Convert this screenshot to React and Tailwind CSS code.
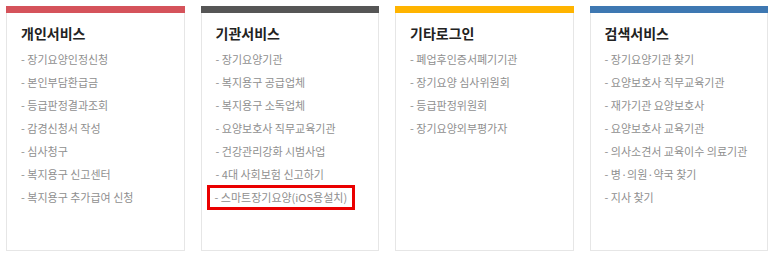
const cards = [
  {
    title: "개인서비스",
    bar: "bg-[#d5535b]",
    items: [
      "장기요양인정신청",
      "본인부담환급금",
      "등급판정결과조회",
      "감경신청서 작성",
      "심사청구",
      "복지용구 신고센터",
      "복지용구 추가급여 신청",
    ],
  },
  {
    title: "기관서비스",
    bar: "bg-[#565656]",
    items: [
      "장기요양기관",
      "복지용구 공급업체",
      "복지용구 소독업체",
      "요양보호사 직무교육기관",
      "건강관리강화 시범사업",
      "4대 사회보험 신고하기",
      "스마트장기요양(iOS용설치)",
    ],
    highlight: 6,
  },
  {
    title: "기타로그인",
    bar: "bg-[#ffb400]",
    items: ["폐업후인증서폐기기관", "장기요양 심사위원회", "등급판정위원회", "장기요양외부평가자"],
  },
  {
    title: "검색서비스",
    bar: "bg-[#3e78b2]",
    items: [
      "장기요양기관 찾기",
      "요양보호사 직무교육기관",
      "재가기관 요양보호사",
      "요양보호사 교육기관",
      "의사소견서 교육이수 의료기관",
      "병·의원·약국 찾기",
      "지사 찾기",
    ],
  },
];

function Card({ card }) {
  return (
    <div className="h-[245px] flex flex-col bg-white">
      <div className={`h-[7px] ${card.bar}`} />
      <div className="flex-1 border border-t-0 border-[#e6e6e6] px-[14px] pt-[10px]">
        <h2 className="text-[14px] leading-[20px] font-bold text-[#222]">{card.title}</h2>
        <ul className="mt-[5px]">
          {card.items.map((item, i) => (
            <li key={item} className="h-[23px] flex items-center text-[11px] text-[#8f8f8f]">
              {card.highlight === i ? (
                <span className="inline-block -ml-[9px] border-[3px] border-[#ea0000] px-[5px] leading-[19px]">
                  - {item}
                </span>
              ) : (
                <span>- {item}</span>
              )}
            </li>
          ))}
        </ul>
      </div>
    </div>
  );
}

export default function App() {
  return (
    <div
      className="w-[773px] h-[256px] bg-white pt-[6px] pl-[6px]"
      style={{ fontFamily: '"Noto Sans CJK KR", "Noto Sans", sans-serif' }}
    >
      <div className="w-[762px] grid grid-cols-4 gap-4">
        {cards.map(c => (
          <Card key={c.title} card={c} />
        ))}
      </div>
    </div>
  );
}
